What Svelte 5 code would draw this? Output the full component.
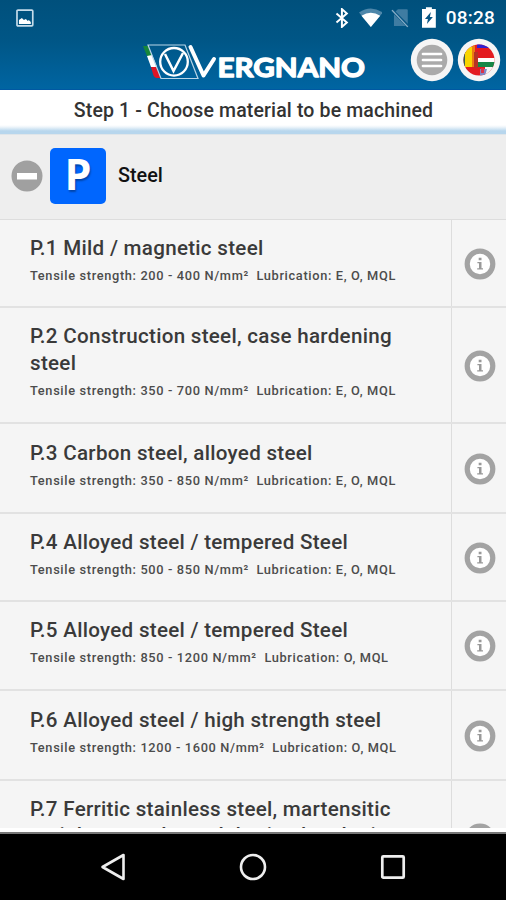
<script>
  const items = [
    { name: 'P.1 Mild / magnetic steel', range: '200 - 400', lube: 'E, O, MQL', h: 88 },
    { name: 'P.2 Construction steel, case hardening steel', range: '350 - 700', lube: 'E, O, MQL', h: 116 },
    { name: 'P.3 Carbon steel, alloyed steel', range: '350 - 850', lube: 'E, O, MQL', h: 90, low: true },
    { name: 'P.4 Alloyed steel / tempered Steel', range: '500 - 850', lube: 'E, O, MQL', h: 88 },
    { name: 'P.5 Alloyed steel / tempered Steel', range: '850 - 1200', lube: 'O, MQL', h: 89 },
    { name: 'P.6 Alloyed steel / high strength steel', range: '1200 - 1600', lube: 'O, MQL', h: 90, low: true },
    { name: 'P.7 Ferritic stainless steel, martensitic stainless steel, resulphurised and micro', h: 117, tight: true }
  ];
</script>

<div class="screen">
  <header>
    <div class="status">
      <svg class="photo" width="18" height="18" viewBox="0 0 18 18"><rect x="1" y="1" width="16" height="16" rx="1" fill="none" stroke="#c5dcea" stroke-width="1.7"/><path d="M3 15v-4l3-2 2 2 2-1 2 2 1-1 2 2v2z" fill="#fff"/></svg>
      <svg class="bt" width="14" height="20" viewBox="0 0 14 20"><path d="M1.5 5.5 12 14.5 7 19V1l5 4.5L1.5 14.5" fill="none" stroke="#fff" stroke-width="2"/></svg>
      <svg class="wifi" width="24" height="20" viewBox="0 0 24 20"><path d="M0 4.5Q12-4 24 4.5L12 19z" fill="#4e87aa"/><path d="M2.5 7.7Q12 1.8 21.5 7.7L12 19z" fill="#fff"/></svg>
      <svg class="sim" width="19" height="20" viewBox="0 0 19 20"><path d="M7 1h9q1 0 1 1v16H3V5z" fill="#3f7ca2"/><path d="m1 2 17 17" stroke="#075584" stroke-width="3"/><path d="m1 2 16 17" stroke="#8aafc7" stroke-width="1.4"/></svg>
      <svg class="battery" width="14" height="21" viewBox="0 0 14 21"><path d="M4 0h6v2h4v19H0V2h4z" fill="#fff"/><path d="m9 5-6 7h3l-1 5 6-7H8z" fill="#075584"/></svg>
      <span class="time">08:28</span>
    </div>
    <svg class="logo" width="232" height="44" viewBox="0 0 232 44">
      <path d="M3 5h5l4 10H7z" fill="#16863b"/><path d="m7 15 5-1 5 12h-6z" fill="#fff"/><path d="M11 26h5l5 11h-4q-3 0-4-4z" fill="#df1526"/>
      <path d="M8 4h37L58 37.5H21z" fill="none" stroke="#b8d5e7" stroke-width="1.2"/>
      <circle cx="34" cy="20.8" r="13.8" fill="none" stroke="#fff" stroke-width="2.3"/>
      <path d="m25 13 8.5 17L43 12" fill="none" stroke="#fff" stroke-width="2.5"/>
      <path d="m50.5 6 13 28.5L74 18" fill="none" stroke="#fff" stroke-width="4" stroke-linejoin="round" stroke-linecap="round"/>
      <text x="77.5" y="36" textLength="147.5" lengthAdjust="spacingAndGlyphs">ERGNANO</text>
    </svg>
    <button class="round menu" aria-label="Menu"><svg width="44" height="44" viewBox="0 0 44 44"><circle cx="22" cy="22" r="21.2" fill="#f5f5f5"/><circle cx="22" cy="22" r="15.3" fill="#aaa"/><path d="M13 16h18M13 22h18M13 28h18" stroke="#fff" stroke-width="2.7" stroke-linecap="round"/></svg></button>
    <button class="round lang" aria-label="Language">
      <svg width="44" height="44" viewBox="0 0 44 44"><defs><clipPath id="globe"><circle cx="22" cy="22" r="15.5"/></clipPath></defs><circle cx="22" cy="22" r="21.2" fill="#f5f5f5"/><g clip-path="url(#globe)"><path d="M6 6h32v32H6z" fill="#e31b20"/><path d="M20 5h13v5H20z" fill="#3020d0"/><path d="M6 8h3v20H6z" fill="#376451"/><path d="M8 9h7v20H8z" fill="#f9d400"/><path d="M15 6h3v23h-3z" fill="#ed7a13"/><path d="M17 14h4v16h-4z" fill="#b83325"/><path d="M21 20h17v4H21z" fill="#fff"/><path d="M21 24h17v5H21z" fill="#168747"/><path d="M28 29h10v9H28z" fill="#f5f5f5"/><path d="M23 31h7l-2 7h-5z" fill="#8187c3"/><path d="M24 30h3v5h-3z" fill="#dd3347"/></g></svg>
    </button>
  </header>
  <div class="step"><span>Step 1 - Choose material to be machined</span></div>
  <main>
    <div class="group">
      <svg class="minus" width="32" height="32" viewBox="0 0 32 32"><circle cx="16" cy="16" r="15.5" fill="#a0a0a0"/><path d="M6 13h20v6.5H6z" fill="#fff"/></svg>
      <div class="tile">P</div>
      <strong>Steel</strong>
    </div>
    {#each items as item}
      <div class="row" class:low={item.low} class:tight={item.tight} style:height="{item.h}px">
        <div class="copy">
          <h2>{item.name}</h2>
          {#if item.range}
            <p>Tensile strength: {item.range} N/mm² &nbsp;Lubrication: {item.lube}</p>
          {/if}
        </div>
        <div class="info">
          <svg width="32" height="32" viewBox="0 0 32 32"><circle cx="16" cy="16" r="12.8" fill="#fff" stroke="#a3a3a3" stroke-width="5.2"/><path d="M14.7 9.8h2.8v2.5h-2.8zM13.4 14h4.1v6.3H19v1.3h-5.8v-1.3H15v-5h-1.6z" fill="#999"/></svg>
        </div>
      </div>
    {/each}
  </main>
  <nav>
    <svg width="28" height="30" viewBox="0 0 28 30"><path d="M24.5 3v24L3.5 15z" fill="none" stroke="#eee" stroke-width="2.6" stroke-linejoin="round"/></svg>
    <svg width="28" height="30" viewBox="0 0 28 30"><circle cx="14" cy="15" r="12" fill="none" stroke="#eee" stroke-width="2.6"/></svg>
    <svg width="28" height="30" viewBox="0 0 28 30"><rect x="3.3" y="4.3" width="21.4" height="21.4" rx="1" fill="none" stroke="#eee" stroke-width="2.7"/></svg>
  </nav>
</div>

<style>
  .screen { width: 506px; height: 900px; display: flex; flex-direction: column; overflow: hidden; background: #fff; font-family: Roboto, sans-serif; color: #333; }
  header { position: relative; height: 90px; flex: none; background: linear-gradient(#00507c, #005686 45%, #0065a2); border-bottom: 1px solid #0058a2; box-sizing: border-box; }
  .status { display: flex; align-items: center; height: 35px; padding: 0 11px 0 16px; }
  .bt { margin-left: 301px; }
  .wifi { margin-left: 10px; }
  .sim { margin-left: 9px; }
  .battery { margin-left: 12px; }
  .time { margin-left: 10px; color: #fff; font-size: 19px; font-weight: 500; letter-spacing: .2px; white-space: nowrap; }
  .logo { position: absolute; left: 140px; top: 41px; }
  .logo text { font-family: Lato, sans-serif; font-size: 26.5px; font-weight: 700; fill: #fff; stroke: #fff; stroke-width: 1.3px; stroke-linejoin: round; }
  .round { position: absolute; top: 38px; padding: 0; border: 0; background: none; line-height: 0; }
  .menu { left: 410px; }
  .lang { left: 457px; }
  .step { height: 44px; flex: none; box-sizing: border-box; display: flex; align-items: flex-start; justify-content: center; padding: 9px 0 0 1px; line-height: 24px; font-size: 19.5px; letter-spacing: .14px; font-weight: 500; background: linear-gradient(#fff 35px, #eef5fa 37px, #b7d6ed 41px, #b7d6ed); }
  .step span { white-space: nowrap; }
  main { height: 694px; flex: none; overflow: hidden; background: #f5f5f5; }
  .group { height: 86px; box-sizing: border-box; border-top: 1px solid #dfe5e9; border-bottom: 1px solid #ddd; background: #eee; display: flex; align-items: center; padding: 0 0 2px 11px; }
  .tile { width: 56px; height: 56px; margin: 0 12px 0 7px; border-radius: 5px; background: #0066fe; color: #fff; font: 700 43px/52px "Open Sans", sans-serif; text-align: center; text-shadow: 1px 2px 2px #0005; }
  .group strong { font-size: 19.8px; font-weight: 500; color: #111; margin-top: -1px; }
  .row { display: flex; box-sizing: border-box; border-bottom: 2px solid #e2e2e2; }
  .copy { width: 452px; flex: none; box-sizing: border-box; border-right: 1px solid #ddd; padding: 15px 35px 0 30px; }
  h2 { margin: 0; font-size: 20.6px; line-height: 27px; font-weight: 500; letter-spacing: .28px; color: #3a3a3a; }
  .low .copy { padding-top: 16px; }
  .tight .copy { padding-top: 16px; }
  .tight h2 { line-height: 25.5px; }
  p { margin: 5px 0 0; font-size: 12.8px; line-height: 18px; font-weight: 500; letter-spacing: .65px; color: #4c4c4c; white-space: nowrap; }
  .info { flex: 1; display: flex; align-items: center; justify-content: center; padding: 1px 0 0 2px; }
  nav { flex: 1; margin-top: 4px; box-sizing: border-box; background: #000; border-top: 2px solid #777; display: flex; align-items: center; justify-content: center; gap: 112px; }
</style>
